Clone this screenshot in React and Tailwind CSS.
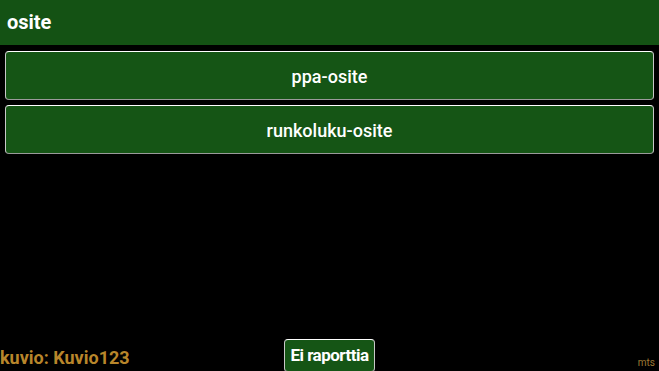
import React from 'react';

const options = ['ppa-osite', 'runkoluku-osite'];

const App = () => {
  return (
    <div
      className="h-[371px] w-[659px] bg-black flex flex-col overflow-hidden"
      style={{ fontFamily: 'Roboto, "Liberation Sans", sans-serif' }}
    >
      <div className="h-[45px] bg-[#145214] flex items-center px-[7px] pb-[2px]">
        <span className="text-white font-bold text-[20px]">osite</span>
      </div>

      <div className="flex flex-col gap-[5px] px-[5px] pt-[6px]">
        {options.map((name) => (
          <button
            key={name}
            className="h-[49px] w-full bg-[#155515] text-white text-[18px] font-medium rounded-[4px] border border-[#c8c8c8] border-t-white border-b-[#9a9a9a] pt-[2px]"
          >
            {name}
          </button>
        ))}
      </div>

      <div className="flex-1" />

      <div className="grid grid-cols-[1fr_auto_1fr] items-end">
        <span className="text-[#b8862b] font-bold text-[18px] leading-none pb-[4px]">kuvio: Kuvio123</span>
        <button className="h-[33px] px-[5px] bg-[#155515] text-white font-bold text-[17px] tracking-[-0.5px] rounded-[4px] border border-[#c8c8c8] border-t-white border-b-[#9a9a9a] mb-[-1px]">
          Ei raporttia
        </button>
        <span className="justify-self-end text-[#9c7a34] text-[10px] leading-none pb-[3px] pr-[4px]">mts</span>
      </div>
    </div>
  );
};

export default App;
